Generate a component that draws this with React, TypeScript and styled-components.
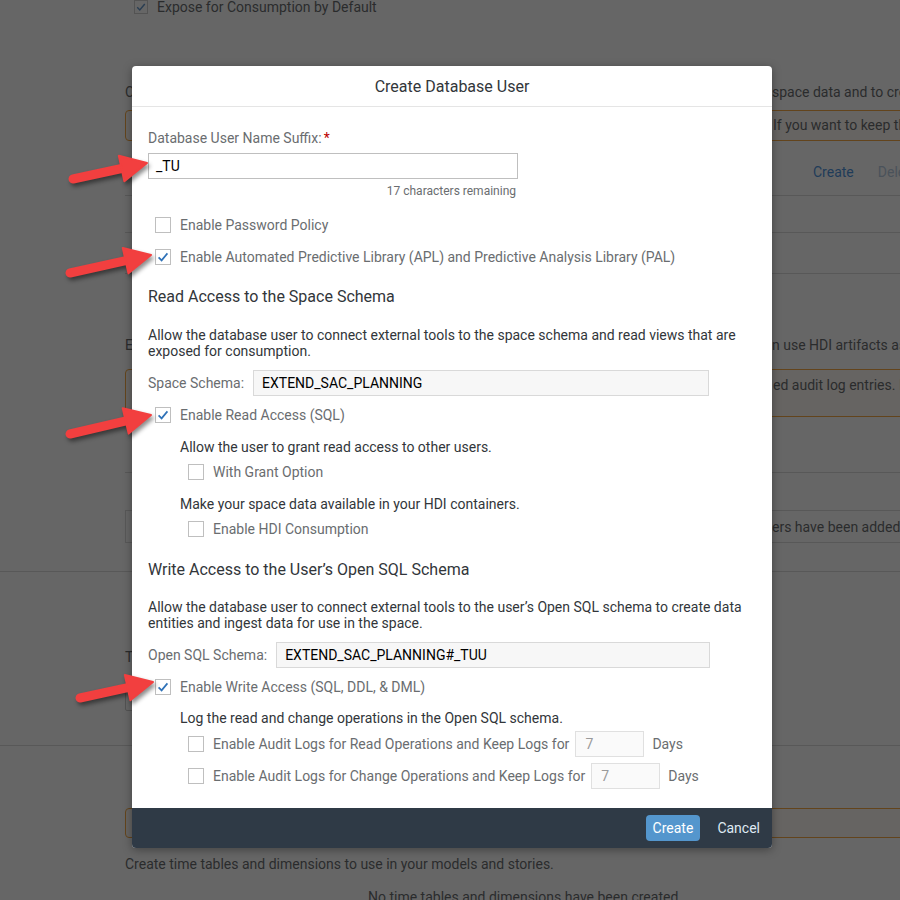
import React from 'react';
import styled, {createGlobalStyle} from 'styled-components';

const GlobalStyle = createGlobalStyle`
  html, body {
    margin: 0;
    padding: 0;
  }
  body {
    font-family: Roboto, "Liberation Sans", Arial, sans-serif;
    font-size: 14px;
  }
`;

type Pt = [number, number];

const arrows: {from: Pt; to: Pt}[] = [
  {from: [73, 179], to: [147, 163]},
  {from: [70, 273], to: [151, 255]},
  {from: [70, 434], to: [151, 415]},
  {from: [80, 698], to: [153, 682]},
];

/* ---------- background page (under the block layer) ---------- */

const Page = styled.div`
  position: relative;
  width: 900px;
  height: 900px;
  overflow: hidden;
  background: #fff;
  color: #32363a;
`;

const Content = styled.div`
  width: 1100px;
  padding-left: 125px;
`;

const BgCheckRow = styled.div`
  display: flex;
  align-items: center;
  gap: 9px;
  height: 14px;
  padding-left: 9px;
  line-height: 16px;
`;

const SplitLine = styled.div<{$mt?: number}>`
  display: flex;
  white-space: nowrap;
  line-height: 16px;
  margin-top: ${p => p.$mt ?? 0}px;
`;

const Lead = styled.span<{$w: number}>`
  flex-shrink: 0;
  width: ${p => p.$w}px;
  overflow: hidden;
`;

const Strip = styled.div<{$mt: number; $h: number}>`
  box-sizing: border-box;
  margin-top: ${p => p.$mt}px;
  height: ${p => p.$h}px;
  padding: ${p => (p.$h > 40 ? 7 : 6)}px 0 0 14px;
  border: 1px solid #f58b00;
  border-radius: 4px;
  background: #fef7f1;
`;

const Toolbar = styled.div`
  box-sizing: border-box;
  display: flex;
  gap: 24px;
  height: 55px;
  padding: 23px 0 0 688px;
  line-height: 16px;
  border-bottom: 1px solid #d0d0d0;
`;

const BgLink = styled.span<{$muted?: boolean}>`
  color: ${p => (p.$muted ? '#9fb9d6' : '#0a6ed1')};
`;

const TableRow = styled.div<{$h: number; $wide?: boolean; $boxed?: boolean}>`
  box-sizing: border-box;
  display: flex;
  align-items: center;
  height: ${p => p.$h}px;
  border-bottom: 1px solid #d0d0d0;
  border-left: ${p => (p.$boxed ? '1px solid #d0d0d0' : 'none')};
  margin-left: ${p => (p.$wide ? -125 : 0)}px;
  padding-left: ${p => (p.$wide ? 125 : p.$boxed ? 16 : 0)}px;
`;

const BgText = styled.div<{$mt: number; $center?: boolean}>`
  margin-top: ${p => p.$mt}px;
  line-height: 16px;
  white-space: nowrap;
  width: ${p => (p.$center ? '800px' : 'auto')};
  text-align: ${p => (p.$center ? 'center' : 'left')};
`;

const BgInput = styled.div`
  box-sizing: border-box;
  margin-top: 20px;
  width: 300px;
  height: 26px;
  border: 1px solid #bfbfbf;
  border-radius: 2px;
`;

const Separator = styled.div<{$mt: number}>`
  margin: ${p => p.$mt}px 0 0 -125px;
  border-top: 1px solid #d0d0d0;
`;

const BlockLayer = styled.div`
  position: absolute;
  inset: 0;
  background: rgba(39, 39, 39, 0.71);
`;

/* ---------- dialog ---------- */

const Dialog = styled.div`
  position: absolute;
  left: 132px;
  top: 66px;
  width: 640px;
  display: flex;
  flex-direction: column;
  background: #fff;
  border-radius: 4px;
  overflow: hidden;
  box-shadow: 0 2px 10px rgba(0, 0, 0, 0.35);
`;

const DialogHeader = styled.header`
  box-sizing: border-box;
  display: flex;
  align-items: center;
  justify-content: center;
  height: 41px;
  font-size: 16px;
  color: #32363a;
  border-bottom: 1px solid #e5e5e5;
`;

const DialogBody = styled.div`
  padding: 23px 16px 16px;
  color: #32363a;
`;

const FieldLabel = styled.div`
  line-height: 16px;
  color: #6a6d70;
`;

const Required = styled.span`
  color: #bb0000;
  margin-left: 2px;
`;

const TextInput = styled.div`
  box-sizing: border-box;
  margin-top: 7px;
  width: 370px;
  height: 26px;
  padding: 0 7px;
  display: flex;
  align-items: center;
  border: 1px solid #bfbfbf;
  color: #000;
`;

const Counter = styled.div`
  width: 368px;
  margin-top: 5px;
  text-align: right;
  font-size: 12px;
  line-height: 14px;
  color: #6a6d70;
`;

const CheckRow = styled.div<{$indent: number; $mt?: number}>`
  display: flex;
  align-items: center;
  gap: 9px;
  height: 32px;
  padding-left: ${p => p.$indent}px;
  margin-top: ${p => p.$mt ?? 0}px;
  color: #6a6d70;
  white-space: nowrap;
`;

const Box = styled.span<{$size: number}>`
  box-sizing: border-box;
  flex-shrink: 0;
  display: flex;
  align-items: center;
  justify-content: center;
  width: ${p => p.$size}px;
  height: ${p => p.$size}px;
  border: 1px solid #bfbfbf;
  background: #fff;
`;

const SectionTitle = styled.div<{$mt: number}>`
  margin-top: ${p => p.$mt}px;
  font-size: 16px;
  line-height: 18px;
  color: #32363a;
`;

const Para = styled.p<{$mt: number; $indent?: number}>`
  margin: ${p => p.$mt}px 0 0;
  padding-left: ${p => p.$indent ?? 0}px;
  line-height: 16px;
  color: #32363a;
`;

const SchemaRow = styled.div`
  display: flex;
  align-items: center;
  gap: 9px;
  margin-top: 11px;
  color: #6a6d70;
`;

const ReadonlyInput = styled.div<{$w: number}>`
  box-sizing: border-box;
  width: ${p => p.$w}px;
  height: 26px;
  padding: 0 8px;
  display: flex;
  align-items: center;
  background: #f7f7f7;
  border: 1px solid #d9d9d9;
  color: #000;
`;

const DaysInput = styled.div`
  box-sizing: border-box;
  width: 69px;
  height: 26px;
  margin: 0 -1px 0 -3px;
  padding: 0 9px;
  display: flex;
  align-items: center;
  background: #fafafa;
  border: 1px solid #e0e0e0;
  color: #9a9a9a;
`;

const Footer = styled.footer`
  display: flex;
  align-items: center;
  justify-content: flex-end;
  gap: 17px;
  height: 40px;
  padding-right: 12px;
  background: #2f3a46;
`;

const Button = styled.button<{$primary?: boolean}>`
  height: 26px;
  padding: 0 ${p => (p.$primary ? 7 : 0)}px;
  border: none;
  border-radius: 4px;
  font-family: inherit;
  font-size: 14px;
  color: ${p => (p.$primary ? '#fff' : '#dfe9f3')};
  background: ${p => (p.$primary ? '#5496cd' : 'transparent')};
`;

const ArrowSvg = styled.svg<{$x: number; $y: number}>`
  position: absolute;
  left: ${p => p.$x}px;
  top: ${p => p.$y}px;
  overflow: visible;
  filter: drop-shadow(2px 3px 2px rgba(0, 0, 0, 0.45));
`;

const Checkbox: React.FC<{checked?: boolean; size?: number}> = ({checked, size = 16}) => (
  <Box $size={size}>
    {checked && (
      <svg width={size - 2} height={size - 2} viewBox="0 0 14 14">
        <polyline points="2.6,7.4 5.6,10.4 11.4,3.4" fill="none" stroke="#2f72b8" strokeWidth="1.7" />
      </svg>
    )}
  </Box>
);

const Arrow: React.FC<{from: Pt; to: Pt}> = ({from, to}) => {
  const dx = to[0] - from[0];
  const dy = to[1] - from[1];
  const len = Math.hypot(dx, dy);
  const angle = (Math.atan2(dy, dx) * 180) / Math.PI;
  return (
    <ArrowSvg width={1} height={1} $x={from[0]} $y={from[1]}>
      <g transform={`rotate(${angle})`}>
        <line x1={0} y1={0} x2={len - 20} y2={0} stroke="#f23f3f" strokeWidth={9} strokeLinecap="round" />
        <polygon
          points={`${len - 26},-13 ${len},0 ${len - 26},13`}
          fill="#f23f3f"
          stroke="#f23f3f"
          strokeWidth={2}
          strokeLinejoin="round"
        />
      </g>
    </ArrowSvg>
  );
};

export default function App() {
  return (
    <>
      <GlobalStyle />
      <Page>
        <Content>
          <BgCheckRow>
            <Checkbox checked size={14} />
            Expose for Consumption by Default
          </BgCheckRow>
          <SplitLine $mt={70}>
            <Lead $w={647}>Create a database user to connect external tools to this space and read its data or to use the </Lead>
            <span>space data and to create new tables and views in the Open SQL schema.</span>
          </SplitLine>
          <Strip $mt={10} $h={31}>
            <SplitLine>
              <Lead $w={633}>Database users are deleted together with their Open SQL schema and its data. </Lead>
              <span>If you want to keep the data, export it before you delete the user.</span>
            </SplitLine>
          </Strip>
          <Toolbar>
            <BgLink>Create</BgLink>
            <BgLink $muted>Delete</BgLink>
          </Toolbar>
          <TableRow $h={37} />
          <TableRow $h={41} />
          <SplitLine $mt={63}>
            <Lead $w={647}>Enable the HDI consumption for this space so that the space users can </Lead>
            <span>n use HDI artifacts as sources in views and data flows.</span>
          </SplitLine>
          <Strip $mt={16} $h={48}>
            <SplitLine>
              <Lead $w={633}>Audit logs can consume a large amount of disk space in the database and the stor</Lead>
              <span>ed audit log entries. If you enable audit logs, keep them only as long as needed.</span>
            </SplitLine>
          </Strip>
          <TableRow $h={56} />
          <TableRow $h={38} />
          <TableRow $h={32} $boxed>
            <Lead $w={630}>No HDI containers have been added. HDI contain</Lead>
            <span>ers have been added to this space.</span>
          </TableRow>
          <TableRow $h={29} $wide />
          <BgText $mt={77}>Time Data</BgText>
          <BgInput />
          <Separator $mt={34} />
          <Strip $mt={62} $h={30}>
            <SplitLine>
              <Lead $w={633}>Time data</Lead>
            </SplitLine>
          </Strip>
          <BgText $mt={18}>Create time tables and dimensions to use in your models and stories.</BgText>
          <BgText $mt={17} $center>
            No time tables and dimensions have been created.
          </BgText>
        </Content>

        <BlockLayer />

        <Dialog>
          <DialogHeader>Create Database User</DialogHeader>
          <DialogBody>
            <FieldLabel>
              Database User Name Suffix:<Required>*</Required>
            </FieldLabel>
            <TextInput>_TU</TextInput>
            <Counter>17 characters remaining</Counter>

            <CheckRow $indent={7} $mt={11}>
              <Checkbox />
              Enable Password Policy
            </CheckRow>
            <CheckRow $indent={7}>
              <Checkbox checked />
              Enable Automated Predictive Library (APL) and Predictive Analysis Library (PAL)
            </CheckRow>

            <SectionTitle $mt={15}>Read Access to the Space Schema</SectionTitle>
            <Para $mt={21}>
              Allow the database user to connect external tools to the space schema and read views that are exposed for
              consumption.
            </Para>
            <SchemaRow>
              Space Schema:
              <ReadonlyInput $w={456}>EXTEND_SAC_PLANNING</ReadonlyInput>
            </SchemaRow>
            <CheckRow $indent={7} $mt={3}>
              <Checkbox checked />
              Enable Read Access (SQL)
            </CheckRow>
            <Para $mt={8} $indent={32}>
              Allow the user to grant read access to other users.
            </Para>
            <CheckRow $indent={40} $mt={1}>
              <Checkbox />
              With Grant Option
            </CheckRow>
            <Para $mt={8} $indent={32}>
              Make your space data available in your HDI containers.
            </Para>
            <CheckRow $indent={40} $mt={1}>
              <Checkbox />
              Enable HDI Consumption
            </CheckRow>

            <SectionTitle $mt={16}>Write Access to the User’s Open SQL Schema</SectionTitle>
            <Para $mt={20}>
              Allow the database user to connect external tools to the user’s Open SQL schema to create data entities and
              ingest data for use in the space.
            </Para>
            <SchemaRow>
              Open SQL Schema:
              <ReadonlyInput $w={434}>EXTEND_SAC_PLANNING#_TUU</ReadonlyInput>
            </SchemaRow>
            <CheckRow $indent={7} $mt={3}>
              <Checkbox checked />
              Enable Write Access (SQL, DDL, &amp; DML)
            </CheckRow>
            <Para $mt={7} $indent={32}>
              Log the read and change operations in the Open SQL schema.
            </Para>
            <CheckRow $indent={40} $mt={2}>
              <Checkbox />
              Enable Audit Logs for Read Operations and Keep Logs for
              <DaysInput>7</DaysInput>
              Days
            </CheckRow>
            <CheckRow $indent={40}>
              <Checkbox />
              Enable Audit Logs for Change Operations and Keep Logs for
              <DaysInput>7</DaysInput>
              Days
            </CheckRow>
          </DialogBody>
          <Footer>
            <Button $primary>Create</Button>
            <Button>Cancel</Button>
          </Footer>
        </Dialog>

        {arrows.map((a, i) => (
          <Arrow key={i} from={a.from} to={a.to} />
        ))}
      </Page>
    </>
  );
}
